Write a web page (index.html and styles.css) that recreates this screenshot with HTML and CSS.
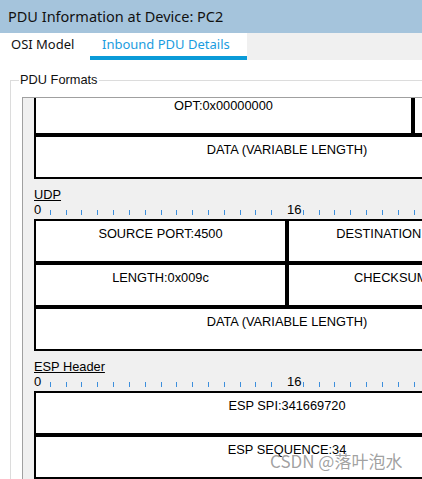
FILE: index.html
```html
<!DOCTYPE html>
<html lang="en">
<head>
    <meta charset="UTF-8">
    <meta name="viewport" content="width=device-width, initial-scale=1.0">
    <title>PDU Information at Device: PC2</title>
    <link rel="stylesheet" href="styles.css">
</head>
<body>
    <div class="titlebar">PDU Information at Device: PC2</div>

    <div class="tabs">
        <div class="tab">OSI Model</div>
        <div class="tab active">Inbound PDU Details</div>
        <div class="tabs-fill"></div>
    </div>

    <div class="content">
        <fieldset class="group">
            <legend>PDU Formats</legend>
            <div class="panel">
                <div class="scroll">
                    <!-- IP (прокручено вниз) -->
                    <div class="pdu">
                        <div class="pdu-row">
                            <div class="field" style="width: 379px">OPT:0x00000000</div>
                            <div class="field" style="width: 127px"></div>
                        </div>
                        <div class="pdu-row">
                            <div class="field full">DATA (VARIABLE LENGTH)</div>
                        </div>
                    </div>

                    <div class="layer">
                        <div class="layer-name">UDP</div>
                        <div class="ruler"></div>
                        <div class="pdu">
                            <div class="pdu-row">
                                <div class="field half">SOURCE PORT:4500</div>
                                <div class="field half">DESTINATION PORT:4500</div>
                            </div>
                            <div class="pdu-row">
                                <div class="field half">LENGTH:0x009c</div>
                                <div class="field half">CHECKSUM:0x0000</div>
                            </div>
                            <div class="pdu-row">
                                <div class="field full">DATA (VARIABLE LENGTH)</div>
                            </div>
                        </div>
                    </div>

                    <div class="layer">
                        <div class="layer-name">ESP Header</div>
                        <div class="ruler"></div>
                        <div class="pdu">
                            <div class="pdu-row">
                                <div class="field full">ESP SPI:341669720</div>
                            </div>
                            <div class="pdu-row">
                                <div class="field full">ESP SEQUENCE:34</div>
                            </div>
                        </div>
                    </div>
                </div>
            </div>
        </fieldset>
    </div>

    <div class="watermark">CSDN @落叶泡水</div>

    <script>
        // линейка на 32 бита: метки 0 и 16, остальное - риски
        document.querySelectorAll('.ruler').forEach(ruler => {
            for (let i = 0; i < 32; i++) {
                const bit = document.createElement('span');
                bit.className = 'bit';
                if (i === 0 || i === 16) {
                    bit.textContent = i;
                } else {
                    bit.classList.add('tick');
                }
                ruler.appendChild(bit);
            }
        });
    </script>
</body>
</html>
```

FILE: styles.css
```css
body {
    margin: 0;
    padding: 0;
    width: 422px;
    height: 479px;
    overflow: hidden;
    background-color: #fff;
    font-family: 'Noto Sans', sans-serif;
    color: #1a1a1a;
    position: relative;
}
.titlebar {
    height: 33px;
    line-height: 33px;
    padding-left: 8px;
    background-color: #a5c4dc;
    font-size: 14.5px;
    color: #111;
    white-space: nowrap;
}
.tabs {
    display: flex;
    height: 27px;
}
.tab {
    height: 27px;
    box-sizing: border-box;
    font-size: 13px;
    line-height: 22px;
    padding-left: 11px;
    width: 90px;
    color: #111;
    white-space: nowrap;
}
.tab.active {
    width: 157px;
    padding-left: 12px;
    color: #1b9ce0;
    border-bottom: 4px solid #0a9bd8;
}
.tabs-fill {
    flex: 1;
    background-color: #f0f0f0;
}
.content {
    height: 420px;
    overflow: hidden;
}
.group {
    margin: 13px 0 0 10px;
    padding: 0 0 0 11px;
    width: 600px;
    height: 500px;
    border: 1px solid #dcdcdc;
    border-right: none;
    border-bottom: none;
}
.group legend {
    margin-left: -3px;
    padding: 0 1px;
    font-family: 'Liberation Sans', Arial, sans-serif;
    font-size: 12.8px;
    line-height: 14px;
    color: #111;
}
.panel {
    margin-top: 10px;
    height: 420px;
    background-color: #f0f0f0;
    border-left: 1px solid #a0a0a0;
    border-top: 1px solid #a0a0a0;
    padding-left: 11px;
    overflow: hidden;
}
.scroll {
    margin-top: -7px;
    font-family: 'Liberation Sans', Arial, sans-serif;
    font-size: 12.8px;
    color: #000;
}
.pdu {
    width: 506px;
}
.pdu-row {
    display: flex;
}
.field {
    box-sizing: border-box;
    height: 44px;
    border: 2px solid #000;
    background-color: #fff;
    padding-top: 6px;
    line-height: 14px;
    text-align: center;
    white-space: nowrap;
    overflow: hidden;
}
.field.half {
    width: 253px;
}
.field.full {
    width: 506px;
}
.layer {
    margin-top: 9px;
}
.layer-name {
    line-height: 14px;
    text-decoration: underline;
    color: #000;
}
.ruler {
    display: flex;
    align-items: flex-end;
    width: 506px;
    height: 17px;
    padding-bottom: 4px;
    box-sizing: border-box;
}
.bit {
    flex: 1;
    line-height: 10px;
    height: 10px;
    font-size: 13px;
    color: #000;
    white-space: nowrap;
}
.bit.tick {
    height: 5px;
    background: linear-gradient(#3d8fdc, #3d8fdc) no-repeat left / 1px 100%;
}
.watermark {
    position: absolute;
    left: 270px;
    top: 448px;
    font-family: 'Noto Sans CJK SC', sans-serif;
    font-size: 17px;
    color: rgba(120, 120, 120, 0.7);
    white-space: nowrap;
}
```
